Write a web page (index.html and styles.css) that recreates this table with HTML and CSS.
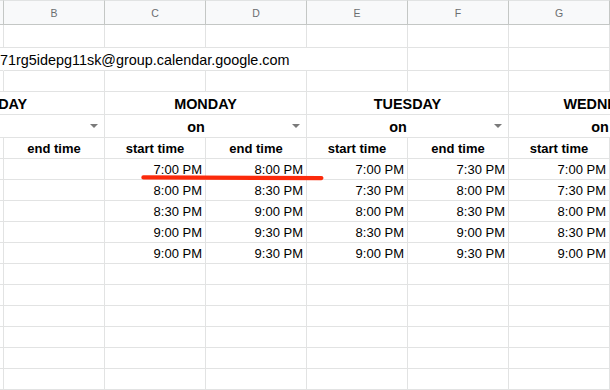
FILE: index.html
```html
<!DOCTYPE html>
<html lang="en">
<head>
<meta charset="utf-8">
<title>Schedule sheet</title>
<link rel="stylesheet" href="styles.css">
</head>
<body>
<div class="sheet">
  <div class="grid">
    <!-- column header row -->
    <div class="hd">A</div>
    <div class="hd">B</div>
    <div class="hd">C</div>
    <div class="hd">D</div>
    <div class="hd">E</div>
    <div class="hd">F</div>
    <div class="hd">G</div>
    <div class="hd">H</div>

    <!-- row 1 -->
    <div class="c"></div><div class="c"></div><div class="c"></div><div class="c"></div>
    <div class="c"></div><div class="c"></div><div class="c"></div><div class="c"></div>

    <!-- row 2: calendar id overflowing from column A -->
    <div class="c open"></div>
    <div class="c big span4 overflow"><span>71rg5idepg11sk@group.calendar.google.com</span></div>
    <div class="c"></div><div class="c"></div><div class="c"></div>

    <!-- row 3 -->
    <div class="c"></div><div class="c"></div><div class="c"></div><div class="c"></div>
    <div class="c"></div><div class="c"></div><div class="c"></div><div class="c"></div>

    <!-- row 4: day names -->
    <div class="c big bold span2 center">SUNDAY</div>
    <div class="c big bold span2 center">MONDAY</div>
    <div class="c big bold span2 center">TUESDAY</div>
    <div class="c big bold span2 center">WEDNESDAY</div>

    <!-- row 5: dropdowns -->
    <div class="c big bold span2 dd"><span class="dd-val"></span><span class="arrow"></span></div>
    <div class="c big bold span2 dd"><span class="dd-val">on</span><span class="arrow"></span></div>
    <div class="c big bold span2 dd"><span class="dd-val">on</span><span class="arrow"></span></div>
    <div class="c big bold span2 dd"><span class="dd-val">on</span><span class="arrow"></span></div>

    <!-- row 6: sub headers -->
    <div class="c bold center">start time</div><div class="c bold center">end time</div>
    <div class="c bold center">start time</div><div class="c bold center">end time</div>
    <div class="c bold center">start time</div><div class="c bold center">end time</div>
    <div class="c bold center">start time</div><div class="c bold center">end time</div>

    <!-- times -->
    <div class="c"></div><div class="c"></div>
    <div class="c num">7:00 PM</div><div class="c num">8:00 PM</div>
    <div class="c num">7:00 PM</div><div class="c num">7:30 PM</div>
    <div class="c num">7:00 PM</div><div class="c num">7:30 PM</div>

    <div class="c"></div><div class="c"></div>
    <div class="c num">8:00 PM</div><div class="c num">8:30 PM</div>
    <div class="c num">7:30 PM</div><div class="c num">8:00 PM</div>
    <div class="c num">7:30 PM</div><div class="c num">8:00 PM</div>

    <div class="c"></div><div class="c"></div>
    <div class="c num">8:30 PM</div><div class="c num">9:00 PM</div>
    <div class="c num">8:00 PM</div><div class="c num">8:30 PM</div>
    <div class="c num">8:00 PM</div><div class="c num">8:30 PM</div>

    <div class="c"></div><div class="c"></div>
    <div class="c num">9:00 PM</div><div class="c num">9:30 PM</div>
    <div class="c num">8:30 PM</div><div class="c num">9:00 PM</div>
    <div class="c num">8:30 PM</div><div class="c num">9:00 PM</div>

    <div class="c"></div><div class="c"></div>
    <div class="c num">9:00 PM</div><div class="c num">9:30 PM</div>
    <div class="c num">9:00 PM</div><div class="c num">9:30 PM</div>
    <div class="c num">9:00 PM</div><div class="c num">9:30 PM</div>

    <!-- empty rows -->
    <div class="c"></div><div class="c"></div><div class="c"></div><div class="c"></div><div class="c"></div><div class="c"></div><div class="c"></div><div class="c"></div>
    <div class="c"></div><div class="c"></div><div class="c"></div><div class="c"></div><div class="c"></div><div class="c"></div><div class="c"></div><div class="c"></div>
    <div class="c"></div><div class="c"></div><div class="c"></div><div class="c"></div><div class="c"></div><div class="c"></div><div class="c"></div><div class="c"></div>
    <div class="c"></div><div class="c"></div><div class="c"></div><div class="c"></div><div class="c"></div><div class="c"></div><div class="c"></div><div class="c"></div>
    <div class="c"></div><div class="c"></div><div class="c"></div><div class="c"></div><div class="c"></div><div class="c"></div><div class="c"></div><div class="c"></div>
    <div class="c"></div><div class="c"></div><div class="c"></div><div class="c"></div><div class="c"></div><div class="c"></div><div class="c"></div><div class="c"></div>
  </div>

  <svg class="mark" width="610" height="390" viewBox="0 0 610 390" aria-hidden="true">
    <line x1="143.4" y1="177.4" x2="321.4" y2="178.1" stroke="#fb2a0b" stroke-width="4.2" stroke-linecap="round"/>
  </svg>
</div>
</body>
</html>
```

FILE: styles.css
```css
* { box-sizing: border-box; }

html, body {
  margin: 0;
  padding: 0;
  background: #ffffff;
}

body {
  font-family: "Liberation Sans", Arial, sans-serif;
  color: #000;
}

.sheet {
  position: relative;
  width: 610px;
  height: 390px;
  overflow: hidden;
}

.grid {
  display: grid;
  grid-template-columns: 113px repeat(7, 101px);
  grid-template-rows: 25px 23px 23px 21px 23px 23px;
  grid-auto-rows: 21px;
  margin-left: -109px;
  width: 820px;
}

.hd {
  background: #f8f9fa;
  border-top: 1px solid #e1e3e3;
  border-right: 1px solid #c4c7c5;
  border-bottom: 1px solid #c4c7c5;
  color: #6b6e70;
  font-size: 10.5px;
  display: flex;
  align-items: center;
  justify-content: center;
  padding-top: 1px;
}

.c {
  border-right: 1px solid #e2e3e3;
  border-bottom: 1px solid #e2e3e3;
  font-size: 13px;
  display: flex;
  align-items: flex-end;
  padding: 0 3px 2px;
  white-space: nowrap;
  min-width: 0;
}

.big { font-size: 14.4px; padding-bottom: 2.5px; }
.bold { font-weight: bold; }
.center { justify-content: center; }
.num { justify-content: flex-end; padding-right: 3px; }

.span2 { grid-column: span 2; }
.span4 { grid-column: span 4; }

.open { border-right-color: transparent; }

.overflow { padding-left: 0; }
.overflow span { margin-left: -4px; }

.dd {
  justify-content: space-between;
  padding-right: 6px;
}
.dd-val {
  flex: 1;
  text-align: center;
  padding-right: 16px;
}
.arrow {
  width: 0;
  height: 0;
  border-left: 4px solid transparent;
  border-right: 4px solid transparent;
  border-top: 4px solid #7a7a7a;
  align-self: center;
  margin-top: 3px;
  margin-left: -8px;
}

.mark {
  position: absolute;
  left: 0;
  top: 0;
  pointer-events: none;
}
```
